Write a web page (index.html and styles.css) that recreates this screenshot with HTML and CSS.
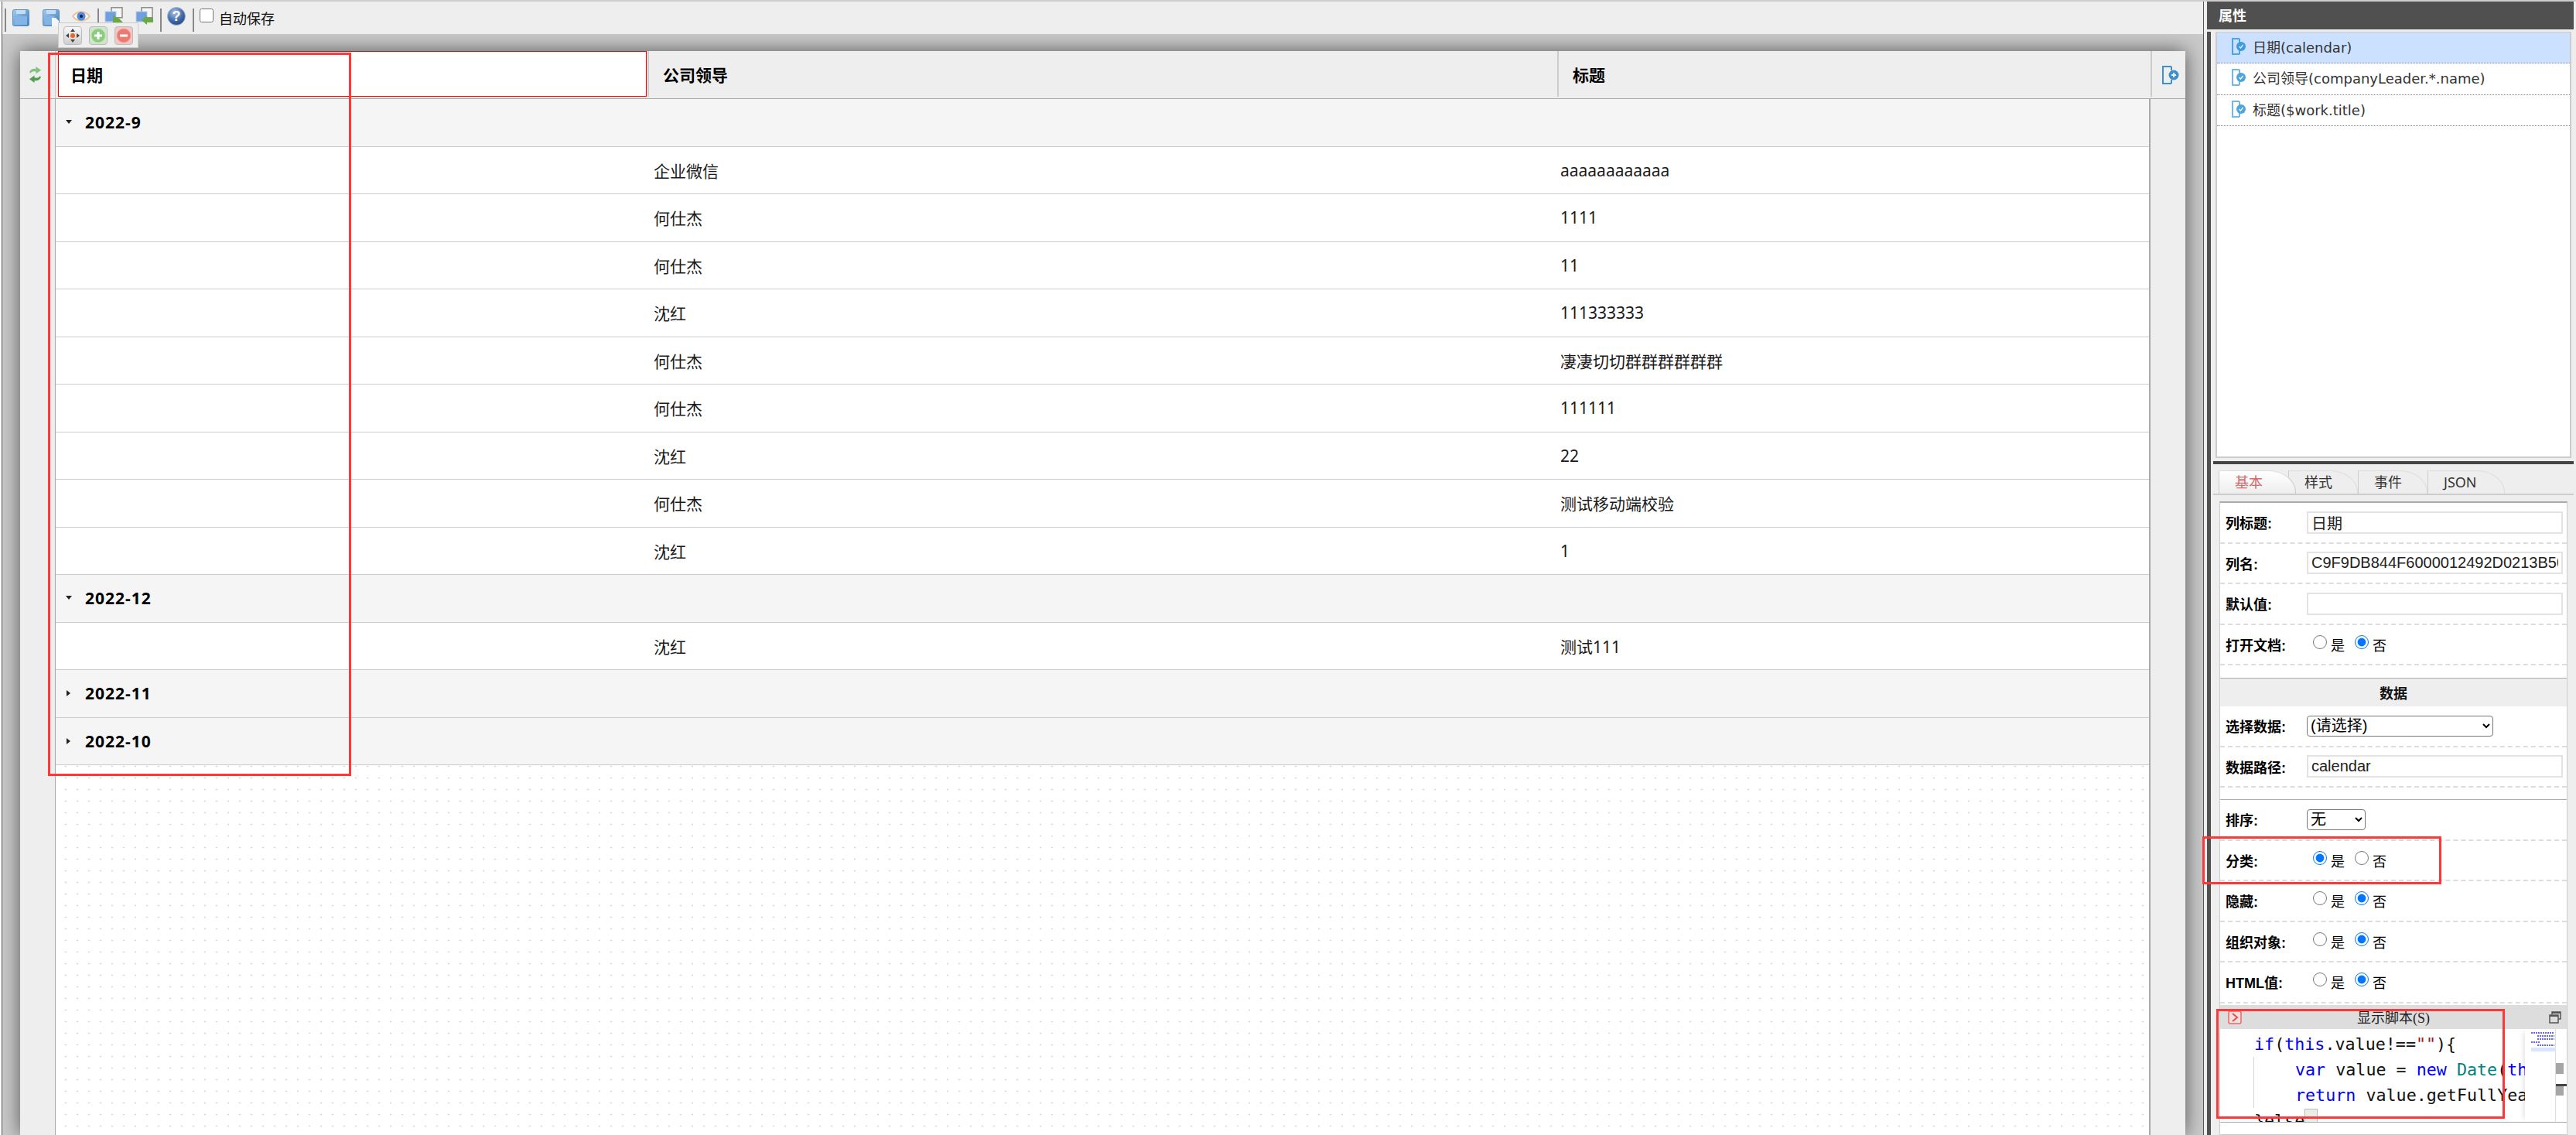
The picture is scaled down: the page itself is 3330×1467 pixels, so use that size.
FILE: index.html
```html
<!DOCTYPE html>
<html lang="zh-CN">
<head>
<meta charset="utf-8">
<title>视图设计</title>
<link rel="stylesheet" href="styles.css">
</head>
<body>
<div class="app">
  <main class="designer">
    <div class="toolbar">
      <span class="sep s1"></span>
      <svg class="tb save" width="22" height="22" viewBox="0 0 22 22"><defs><linearGradient id="fl" x1="0" y1="0" x2="1" y2="1"><stop offset="0" stop-color="#a5cbee"/><stop offset="1" stop-color="#3f7db9"/></linearGradient><radialGradient id="hp" cx=".4" cy=".3" r=".8"><stop offset="0" stop-color="#a9c1e2"/><stop offset=".6" stop-color="#3d69a8"/><stop offset="1" stop-color="#1f3f78"/></radialGradient></defs><rect x=".5" y=".5" width="21" height="21" rx="2" fill="url(#fl)" stroke="#5b8fc2"/><rect x="5" y="1" width="12" height="5" fill="#c3dcf3"/><rect x="3" y="9" width="16" height="11" fill="#82b5e6"/></svg>
      <svg class="tb saveas" width="22" height="22" viewBox="0 0 22 22"><rect x=".5" y=".5" width="21" height="21" rx="2" fill="url(#fl)" stroke="#5b8fc2"/><rect x="5" y="1" width="12" height="5" fill="#c3dcf3"/><rect x="3" y="9" width="12" height="11" fill="#82b5e6"/><path d="M12 11h5l4 4v7h-9z" fill="#f2f5f9"/></svg>
      <svg class="tb eye" width="24" height="18" viewBox="0 0 24 18"><path d="M0 9C5 0 19 0 24 9 19 18 5 18 0 9z" fill="#e9c4a2"/><path d="M2.500 9C7 3 17 3 21.500 9 17 15 7 15 2.500 9z" fill="#fafafa"/><circle cx="12" cy="9" r="5.500" fill="#5288d6"/><circle cx="12" cy="9" r="2" fill="#10224a"/></svg>
      <span class="sep s2"></span>
      <svg class="tb copy" width="25" height="25" viewBox="0 0 25 25"><rect x="9" y=".8" width="14" height="13" fill="#f6f6f6" stroke="#8a8a8a" stroke-width="1.500"/><rect x="1" y="6" width="14" height="13" fill="#6f9fe0" stroke="#b7c9e4"/><path d="M11 11l8 4 5 5-4 1-2 4-7-4z" fill="#6aa842"/></svg>
      <svg class="tb copy2" width="24" height="25" viewBox="0 0 24 25"><rect x="8" y=".8" width="14" height="13" fill="#f6f6f6" stroke="#8a8a8a" stroke-width="1.500"/><rect x="1" y="6" width="14" height="13" fill="#6f9fe0" stroke="#b7c9e4"/><path d="M8 17l7-6v3h8v6h-8v3z" fill="#6aa842"/></svg>
      <span class="sep s3"></span>
      <svg class="tb help" width="24" height="24" viewBox="0 0 24 24"><circle cx="12" cy="12" r="11.500" fill="url(#hp)" stroke="#a9b6c9"/><text x="12" y="18" text-anchor="middle" class="help-q">?</text></svg>
      <span class="sep s4"></span>
      <label class="autosave"><input type="checkbox" class="auto-check"><span>自动保存</span></label>
    </div>

    <div class="canvas">
      <section class="form-box">
        <div class="form-head">
          <div class="head-gutter">
            <svg width="17" height="21" viewBox="0 0 18 22"><path d="M1 8c1-4 5-6 9-5V0l7 5-7 5V7C7 6 4 7 3 9z" fill="#82c47e"/><path d="M17 14c-1 4-5 6-9 5v3l-7-5 7-5v3c3 1 6 0 7-2z" fill="#539e53"/></svg>
          </div>
          <div class="head-cell"><div class="head-selected">日期</div></div>
          <div class="head-cell"><div class="head-plain">公司领导</div></div>
          <div class="head-cell"><div class="head-plain">标题</div></div>
          <div class="head-add">
            <svg width="22" height="24" viewBox="0 0 22 24"><path d="M12 1H1v22h11" fill="none" stroke="#3e90c9" stroke-width="2"/><path d="M12 1v5M12 18v5" stroke="#3e90c9" stroke-width="2"/><circle cx="15" cy="12" r="6.500" fill="#3e90c9"/><path d="M12 12h6M15 9v6" stroke="#e8f3fa" stroke-width="2"/></svg>
          </div>
        </div>
        <div class="form-body">
          <div class="gutter"></div>
          <div class="view-table">
            <div class="group"><i class="arrow-down"></i><b>2022-9</b></div>
            <div class="row"><span></span><span>企业微信</span><span>aaaaaaaaaaaa</span></div>
            <div class="row"><span></span><span>何仕杰</span><span>1111</span></div>
            <div class="row"><span></span><span>何仕杰</span><span>11</span></div>
            <div class="row"><span></span><span>沈红</span><span>111333333</span></div>
            <div class="row"><span></span><span>何仕杰</span><span>凄凄切切群群群群群群</span></div>
            <div class="row"><span></span><span>何仕杰</span><span>111111</span></div>
            <div class="row"><span></span><span>沈红</span><span>22</span></div>
            <div class="row"><span></span><span>何仕杰</span><span>测试移动端校验</span></div>
            <div class="row"><span></span><span>沈红</span><span>1</span></div>
            <div class="group"><i class="arrow-down"></i><b>2022-12</b></div>
            <div class="row"><span></span><span>沈红</span><span>测试111</span></div>
            <div class="group"><i class="arrow-right"></i><b>2022-11</b></div>
            <div class="group"><i class="arrow-right"></i><b>2022-10</b></div>
          </div>
          <div class="side-col"></div>
        </div>
      </section>
    </div>
  </main>

  <aside class="panel">
    <h2 class="panel-title">属性</h2>
    <div class="panel-body">
      <div class="strip"></div>
      <div class="panel-main">
        <ul class="field-list">
          <li class="field active"><svg width="20" height="24" viewBox="0 0 20 24"><path d="M11 2H2v20h9M11 2v5M11 17v5" fill="none" stroke="#4ca5e0" stroke-width="2"/><circle cx="13" cy="12" r="6" fill="#3f9ade"/><path d="M10.500 12l2 2 3-4" fill="none" stroke="#cfe8fa" stroke-width="1.500"/></svg>日期(calendar)</li>
          <li class="field"><svg width="20" height="24" viewBox="0 0 20 24"><path d="M11 2H2v20h9M11 2v5M11 17v5" fill="none" stroke="#6fb8e8" stroke-width="2"/><circle cx="13" cy="12" r="6" fill="#4ca5e0"/><path d="M10.500 12l2 2 3-4" fill="none" stroke="#e3f2fc" stroke-width="1.500"/></svg>公司领导(companyLeader.*.name)</li>
          <li class="field"><svg width="20" height="24" viewBox="0 0 20 24"><path d="M11 2H2v20h9M11 2v5M11 17v5" fill="none" stroke="#6fb8e8" stroke-width="2"/><circle cx="13" cy="12" r="6" fill="#4ca5e0"/><path d="M10.500 12l2 2 3-4" fill="none" stroke="#e3f2fc" stroke-width="1.500"/></svg>标题($work.title)</li>
        </ul>
        <div class="divider"></div>
        <div class="tabs">
          <span class="tab current">基本</span>
          <span class="tab">样式</span>
          <span class="tab">事件</span>
          <span class="tab wide">JSON</span>
        </div>
        <div class="prop-form">
          <div class="prop"><label>列标题:</label><input class="txt" type="text" value="日期"></div>
          <div class="prop"><label>列名:</label><input class="txt" type="text" value="C9F9DB844F6000012492D0213B50C"></div>
          <div class="prop"><label>默认值:</label><input class="txt" type="text" value=""></div>
          <div class="prop"><label>打开文档:</label><div class="radios"><input type="radio" name="r1"><span>是</span><input type="radio" name="r1" checked><span>否</span></div></div>
          <div class="section-title">数据</div>
          <div class="prop"><label>选择数据:</label><select class="sel-wide"><option>(请选择)</option></select></div>
          <div class="prop"><label>数据路径:</label><input class="txt" type="text" value="calendar"></div>
          <div class="section-rule"></div>
          <div class="prop"><label>排序:</label><select class="sel-small"><option>无</option></select></div>
          <div class="prop"><label>分类:</label><div class="radios"><input type="radio" name="r2" checked><span>是</span><input type="radio" name="r2"><span>否</span></div></div>
          <div class="prop"><label>隐藏:</label><div class="radios"><input type="radio" name="r3"><span>是</span><input type="radio" name="r3" checked><span>否</span></div></div>
          <div class="prop"><label>组织对象:</label><div class="radios"><input type="radio" name="r4"><span>是</span><input type="radio" name="r4" checked><span>否</span></div></div>
          <div class="prop"><label>HTML值:</label><div class="radios"><input type="radio" name="r5"><span>是</span><input type="radio" name="r5" checked><span>否</span></div></div>
          <div class="script-bar">
            <svg class="script-icon" width="18" height="18" viewBox="0 0 18 18"><rect x="1" y="1" width="16" height="16" rx="2" fill="#f4dede" stroke="#e46a6a" stroke-width="1.500"/><path d="M6 4l6 5-6 5" fill="none" stroke="#e0504f" stroke-width="2"/></svg>
            <span class="script-title">显示脚本(S)</span>
            <svg class="script-max" width="16" height="16" viewBox="0 0 16 16"><path d="M4 4V1h11v9h-3" fill="none" stroke="#555" stroke-width="1.500"/><path d="M4 1h11v2H4z" fill="#555"/><rect x="1" y="5" width="11" height="10" fill="none" stroke="#555" stroke-width="1.500"/><path d="M1 5h11v2H1z" fill="#555"/></svg>
          </div>
          <div class="editor">
            <div class="code">
              <div class="ln"><span class="kw">if</span>(<span class="kw">this</span>.value!==<span class="str">""</span>){</div>
              <div class="indent">
                <div class="ln"><span class="kw">var</span> value = <span class="kw">new</span> <span class="ty">Date</span>(<span class="kw">this</span>.value);</div>
                <div class="ln"><span class="kw">return</span> value.getFullYear();</div>
              </div>
              <div class="ln">}else{</div>
              <span class="widget"></span>
            </div>
            <div class="minimap">
              <i class="m m1"></i><i class="m m2"></i><i class="m m3"></i><i class="m m4"></i><i class="m m3"></i><i class="m hl"></i>
            </div>
            <div class="scroller"><i class="thumb t1"></i><i class="cursor"></i><i class="thumb t2"></i></div>
          </div>
        </div>
      </div>
    </div>
  </aside>

  <div class="popup">
    <span class="pbtn"><svg width="18" height="18" viewBox="0 0 18 18"><path d="M9 0l3 4H6zM9 18l-3-4h6zM0 9l4-3v6zM18 9l-4 3V6z" fill="#444"/><circle cx="9" cy="9" r="3" fill="#f0641e"/></svg></span>
    <span class="pbtn green"><svg width="20" height="20" viewBox="0 0 20 20"><circle cx="10" cy="10" r="9" fill="#8ccb7c" stroke="#b5e0ad"/><path d="M10 5v10M5 10h10" stroke="#fff" stroke-width="3"/></svg></span>
    <span class="pbtn red"><svg width="20" height="20" viewBox="0 0 20 20"><circle cx="10" cy="10" r="9" fill="#ec7a70" stroke="#f2a29b"/><path d="M5 10h10" stroke="#fff" stroke-width="3"/></svg></span>
  </div>
  <div class="mark mark-date"></div>
  <div class="mark mark-class"></div>
  <div class="mark mark-script"></div>
</div>
</body>
</html>
```
FILE: styles.css
```css
* { box-sizing: border-box; }
html, body { margin: 0; padding: 0; height: 100%; overflow: hidden; }
body { background: #ccc; font-family: "Noto Sans", "Noto Sans CJK SC", sans-serif; color: #111; }
.app { position: relative; display: flex; height: 1467px; padding-top: 2px; overflow: hidden; }

/* left designer */
.designer { width: 2849px; flex: none; display: flex; flex-direction: column; padding-left: 2px; background: #fff; border-right: 1px solid #555; }
.designer > * { border-left: 1px solid #555; }
.toolbar { height: 42px; flex: none; display: flex; align-items: center; background: #eee; padding-left: 3px; }
.sep { width: 2px; height: 30px; background: #888; flex: none; align-self: flex-start; margin-top: 9px; }
.s2 { margin-left: 9px; }
.s3 { margin-left: 8px; }
.s4 { margin-left: 9px; }
.tb { flex: none; }
.save { margin-left: 8px; }
.saveas { margin-left: 17px; }
.eye { margin-left: 16px; margin-top: -4px; }
.copy { margin-left: 7px; margin-top: -4px; }
.copy2 { margin-left: 15px; margin-top: -4px; }
.help { margin-left: 7px; margin-top: -4px; }
.help-q { font: bold 18px "Liberation Sans", sans-serif; fill: #fff; }
.autosave { display: flex; align-items: center; margin-left: 7px; font-size: 18px; }
.auto-check { width: 18px; height: 18px; margin: 0 7px 6px 0; }

.canvas { flex: 1; min-height: 0; padding: 22px 23px 0; background: #cacaca; overflow: hidden; }
.form-box { height: 100%; display: flex; flex-direction: column; background: #eee; box-shadow: 0 0 24px #555; }
.form-head { height: 62px; flex: none; display: grid; grid-template-columns: 46px 767px 1176px 767px 43px; border-bottom: 1px solid #aaa; font-size: 21px; font-weight: 700; color: #000; }
.head-gutter { display: flex; align-items: center; justify-content: center; border-right: 1px solid #ccc; padding-right: 6px; }
.head-cell { border-right: 2px solid #ccc; margin-bottom: 2px; padding: 0 0 0 3px; display: flex; }
.head-selected { flex: 1; margin-right: 1px; background: #fff; border: 1px solid #f00; padding-left: 15px; display: flex; align-items: center; }
.head-plain { padding-left: 15px; display: flex; align-items: center; }
.head-add { display: flex; align-items: center; justify-content: center; padding-left: 4px; }

.form-body { flex: 1; min-height: 0; display: flex; }
.gutter { width: 46px; flex: none; border-right: 1px solid #aaa; }
.view-table { flex: 1; min-width: 0; background-color: #fff; background-image: radial-gradient(circle at center, #c2c2c2 .8px, transparent 1.1px); background-size: 15px 15px; background-position: 5.500px 0; font-size: 21px; }
.side-col { width: 47px; flex: none; border-left: 2px solid #aaa; }
.group { height: 61.5px; display: flex; align-items: center; background: #f5f5f5; border-bottom: 1px solid #ccc; padding-left: 13px; color: #000; }
.group b { font-weight: 700; letter-spacing: 1px; }
.arrow-down, .arrow-right { display: block; width: 25px; flex: none; height: 0; position: relative; }
.arrow-down::before { content: ""; position: absolute; left: 0; top: -3px; border-style: solid; border-width: 5px 4.500px 0; border-color: #222 transparent transparent; }
.arrow-right::before { content: ""; position: absolute; left: 1px; top: -4px; border-style: solid; border-width: 4.500px 0 4.500px 5px; border-color: transparent transparent transparent #222; }
.row { height: 61.5px; display: grid; grid-template-columns: 773px 1172px 1fr; align-items: center; background: #fff; border-bottom: 1px solid #ccc; color: #1a1a1a; }

/* right panel */
.panel { flex: 1; min-width: 0; display: flex; flex-direction: column; padding: 0 3px 0 4px; background: #eee; }
.panel-title { margin: 0; height: 36px; flex: none; display: flex; align-items: center; background: #505050; color: #fff; font-size: 18px; font-weight: 700; padding: 0 0 3px 15px; }
.panel-body { flex: 1; min-height: 0; display: flex; margin-top: 3px; }
.strip { width: 5px; flex: none; background: #505050; }
.panel-main { flex: 1; min-width: 0; display: flex; flex-direction: column; padding-left: 3px; }
.field-list { list-style: none; margin: 0 3px; padding: 0 0 0; height: 551px; flex: none; background: #fff; border: 2px solid #ccc; border-top-width: 1px; font-family: "DejaVu Sans", "Noto Sans CJK SC", sans-serif; font-size: 18px; color: #333; }
.field { height: 40.3px; display: flex; align-items: center; gap: 8px; padding: 0 0 3px 18px; border-bottom: 1px dotted #888; }
.field.active { background: #cbe1ff; }
.divider { height: 4px; flex: none; margin-top: 4px; background: #444; }
.tabs { height: 32px; flex: none; margin-top: 8px; display: flex; padding-left: 7px; border-bottom: 2px solid #ccc; font-size: 18px; color: #333; }
.tab { width: 90px; padding-left: 20px; border-left: 1px solid #ccc; border-top: 1px solid #ddd; border-top-right-radius: 36px 28px; border-right: 1px solid #ddd; line-height: 29px; }
.tab.current { width: 100px; margin-right: -10px; position: relative; color: #d46a6a; background: linear-gradient(#fff, #eee); z-index: 1; border-right-color: #ccc; }
.tab.wide { width: 100px; }
.prop-form { flex: 1; min-height: 0; margin: 8px 8px 0; background: #fff; border: 1px solid #ccc; border-top: 2px solid #aaa; overflow: hidden; font-family: "Liberation Sans", "Noto Sans CJK SC", sans-serif; font-size: 18px; }
.prop { height: 52.5px; display: flex; align-items: center; padding-left: 7px; border-bottom: 2px dashed #ddd; color: #000; }
.prop label { width: 105px; flex: none; font-weight: 700; }
.txt { width: 331px; height: 29px; padding: 0 4px; margin: 0; border: 2px solid #e3e3e3; background: #fff; font: inherit; font-size: 20px; color: #222; outline: none; }
.sel-wide, .sel-small { height: 27px; margin: 0; font: inherit; font-size: 20px; line-height: 1; background: #fff; border-radius: 4px; }
.sel-wide { width: 241px; }
.sel-small { width: 76px; }
.radios { display: flex; align-items: center; margin-left: 8px; }
.radios input { width: 18px; height: 18px; margin: 0 5px 6px 0; flex: none; }
.radios span { width: 18px; margin-right: 13px; }
.section-title { height: 37px; margin-top: 16px; display: flex; align-items: center; justify-content: center; background: #eee; border-top: 1px solid #aaa; font-weight: 700; }
.section-rule { height: 1px; margin-top: 15px; background: #aaa; }
.script-bar { height: 31px; margin-top: 2px; display: flex; align-items: center; position: relative; justify-content: center; background: #ddd; }
.script-icon { position: absolute; left: 10px; top: 7px; }
.script-max { position: absolute; right: 7px; top: 8px; }
.script-title { font-family: "Liberation Serif", "Noto Sans CJK SC", serif; font-size: 18px; color: #222; }
.editor { height: 121px; display: flex; background: #fff; border-bottom: 1px solid #aaa; overflow: hidden; }
.code { position: relative; width: 394px; flex: none; padding: 3px 0 0 44px; overflow: hidden; font-family: "DejaVu Sans Mono", monospace; font-size: 21.700px; line-height: 33px; color: #111; }
.kw { color: #0000ff; }
.str { color: #a31515; }
.ty { color: #008080; }
.indent { margin-left: -1px; padding-left: 53px; border-left: 1px solid #d6d6d6; }
.widget { position: absolute; left: 109px; top: 103px; width: 17px; height: 18px; background: #e9efe6; border: 1px solid #bbb; }
.ln { height: 33px; white-space: pre; }
.minimap { width: 40px; flex: none; padding: 4px 0 0 8px; display: flex; flex-direction: column; gap: 2px; box-shadow: -6px 0 6px -4px #e4e4e4; border-right: 1px solid #ddd; }
.m { display: block; height: 2px; background: repeating-linear-gradient(90deg, #6a6adb 0 2px, #fff 2px 3px); }
.m1 { width: 30px; }
.m2 { width: 22px; margin-left: 8px; }
.m3 { width: 22px; margin-left: 8px; }
.m4 { width: 12px; }
.hl { width: 32px; height: 5px; background: #d6e6ff; }
.scroller { flex: 1; position: relative; }
.thumb { position: absolute; left: 0; width: 10px; background: #a6a6a6; }
.t1 { top: 44px; height: 14px; }
.t2 { top: 71px; height: 15px; }
.cursor { position: absolute; left: 0; right: 0; top: 71px; height: 3px; background: #444; z-index: 1; }

/* overlays */
.popup { position: absolute; left: 75px; top: 29px; width: 104px; height: 33px; display: flex; gap: 9px; padding: 4px 6px; background: #eee; border: 1px solid #ccc; }
.pbtn { width: 24px; height: 24px; display: flex; align-items: center; justify-content: center; border: 1px solid #bbb; border-radius: 4px; background: linear-gradient(#f8f8f8, #cfcfcf); }
.pbtn.green { background: #cfe6c8; }
.pbtn.red { background: #efc9c5; }
.mark { position: absolute; border: 3px solid #ff3737; pointer-events: none; }
.mark-date { left: 62px; top: 68px; width: 392px; height: 935px; }
.mark-class { left: 2847px; top: 1081px; width: 309px; height: 62px; }
.mark-script { left: 2865px; top: 1304px; width: 373px; height: 142px; }
```
